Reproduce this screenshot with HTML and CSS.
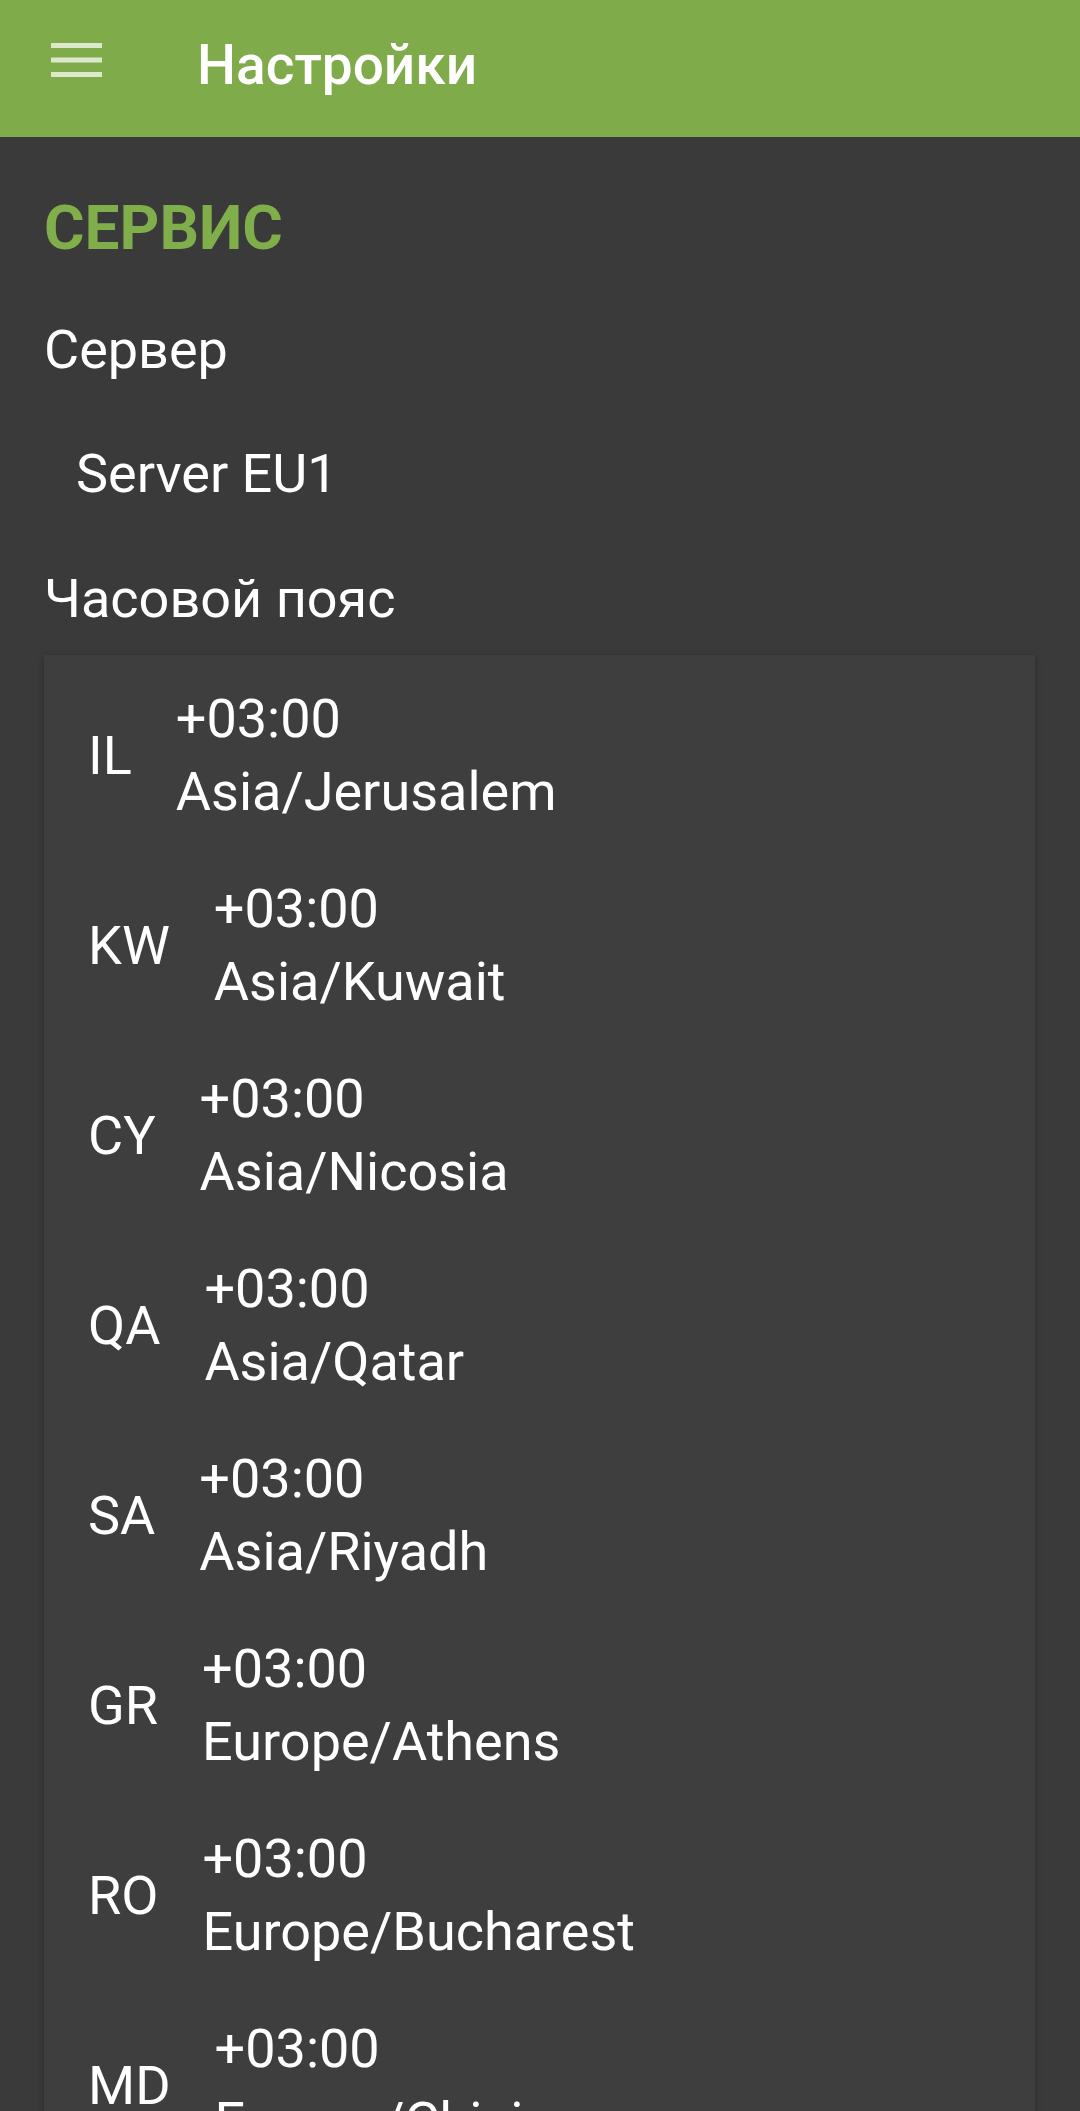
FILE: index.html
```html
<!DOCTYPE html>
<html lang="ru">
<head>
<meta charset="utf-8">
<title>Настройки</title>
<link rel="stylesheet" href="styles.css">
</head>
<body>
<header class="toolbar">
  <button class="nav-btn" aria-label="Меню">
    <svg width="51" height="34" viewBox="0 0 51 34">
      <rect x="0" y="0" width="51" height="5"/>
      <rect x="0" y="14.5" width="51" height="5"/>
      <rect x="0" y="29" width="51" height="5"/>
    </svg>
  </button>
  <h1 class="toolbar-title">Настройки</h1>
</header>

<main class="prefs">
  <h2 class="category">СЕРВИС</h2>
  <div class="pref-title">Сервер</div>
  <div class="pref-value">Server EU1</div>
  <div class="pref-title pref-title-last">Часовой пояс</div>

  <ul class="tz-list">
    <li class="tz-row"><span class="tz-code">IL</span><span class="tz-info"><span>+03:00</span><span>Asia/Jerusalem</span></span></li>
    <li class="tz-row"><span class="tz-code">KW</span><span class="tz-info"><span>+03:00</span><span>Asia/Kuwait</span></span></li>
    <li class="tz-row"><span class="tz-code">CY</span><span class="tz-info"><span>+03:00</span><span>Asia/Nicosia</span></span></li>
    <li class="tz-row"><span class="tz-code">QA</span><span class="tz-info"><span>+03:00</span><span>Asia/Qatar</span></span></li>
    <li class="tz-row"><span class="tz-code">SA</span><span class="tz-info"><span>+03:00</span><span>Asia/Riyadh</span></span></li>
    <li class="tz-row"><span class="tz-code">GR</span><span class="tz-info"><span>+03:00</span><span>Europe/Athens</span></span></li>
    <li class="tz-row"><span class="tz-code">RO</span><span class="tz-info"><span>+03:00</span><span>Europe/Bucharest</span></span></li>
    <li class="tz-row"><span class="tz-code">MD</span><span class="tz-info"><span>+03:00</span><span>Europe/Chisinau</span></span></li>
  </ul>
</main>
</body>
</html>
```

FILE: styles.css
```css
html, body {
  margin: 0;
  padding: 0;
}

body {
  background: #3a3a3a;
  color: #ffffff;
  font-family: Roboto, "Noto Sans", sans-serif;
  min-height: 2111px;
}

/* App bar */
.toolbar {
  display: flex;
  align-items: flex-start;
  height: 137px;
  box-sizing: border-box;
  background: #80ab4b;
}

.nav-btn {
  margin: 43px 0 0 51px;
  padding: 0;
  border: 0;
  background: none;
  line-height: 0;
}

.nav-btn svg {
  display: block;
  fill: #dbe8cc;
}

.toolbar-title {
  margin: 33px 0 0 95px;
  font-size: 55px;
  font-weight: 500;
  line-height: 64px;
  color: #ffffff;
}

/* Preference screen */
.prefs {
  padding: 55px 45px 0 44px;
}

.category {
  margin: 0 0 49px;
  font-size: 62px;
  font-weight: 700;
  line-height: 72px;
  color: #7fae4a;
}

.pref-title,
.pref-value {
  font-size: 54px;
  line-height: 73px;
}

.pref-title {
  margin-bottom: 51px;
}

.pref-title-last {
  margin-bottom: 20px;
}

.pref-value {
  padding-left: 32px;
  margin-bottom: 52px;
}

/* Time zone picker list */
.tz-list {
  list-style: none;
  margin: 0;
  padding: 5px 0 0 44px;
  background: #3e3e3e;
  box-shadow: 0 2px 6px rgba(0, 0, 0, 0.28);
}

.tz-row {
  display: flex;
  align-items: center;
  gap: 44px;
  padding: 22px 0;
  font-size: 54px;
  line-height: 73px;
}

.tz-info {
  display: flex;
  flex-direction: column;
}
```
